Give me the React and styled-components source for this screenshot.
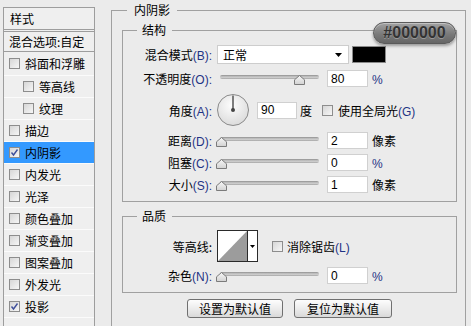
import React from 'react';
import styled, { createGlobalStyle } from 'styled-components';

const GlobalStyle = createGlobalStyle`
  html, body {
    margin: 0;
    padding: 0;
    width: 471px;
    height: 326px;
    overflow: hidden;
    background: #ebebeb;
  }
  body {
    font-family: "Noto Sans CJK SC", "Liberation Sans", sans-serif;
    font-size: 12px;
    color: #000;
  }
  #root { height: 100%; }
`;

const Page = styled.div`
  display: flex;
  align-items: flex-start;
  height: 326px;
  padding: 3px 0 0 3px;
  box-sizing: border-box;
  overflow: hidden;
`;

/* ---------- sidebar ---------- */
const Sidebar = styled.div`
  flex: none;
  width: 92px;
  height: 340px;
  margin-top: 4px;
  box-sizing: border-box;
  border: 1px solid #9d9d9d;
  background: #efefef;
  display: flex;
  flex-direction: column;
  overflow: hidden;
`;

const SideHeader = styled.div`
  height: 21px;
  line-height: 21px;
  padding-left: 6px;
  border-bottom: 1px solid #9d9d9d;
  margin-bottom: 1px;
`;

const BlendRow = styled.div`
  height: 19px;
  line-height: 19px;
  padding-left: 5px;
  border-top: 1px solid #9d9d9d;
  border-bottom: 1px solid #9d9d9d;
  white-space: nowrap;
`;

const ItemList = styled.div`
  display: flex;
  flex-direction: column;
  & > :first-child { height: 23px; }
`;

const Item = styled.div`
  height: 21px;
  display: flex;
  align-items: center;
  gap: 5px;
  padding-left: ${p => (p.$indent ? 19 : 5)}px;
  border-bottom: 1px solid #fbfbfb;
  background: ${p => (p.$selected ? '#3399ff' : 'transparent')};
  white-space: nowrap;
`;

const Box = styled.span`
  flex: none;
  display: inline-flex;
  width: 11px;
  height: 11px;
  box-sizing: border-box;
  border: 1px solid #8d8d8d;
  background: linear-gradient(135deg, #d6d6d6, #f6f6f6);
  margin-left: ${p => p.$ml || 0}px;
`;

const Check = ({ checked, ml }) => (
  <Box $ml={ml}>
    {checked && (
      <svg width="9" height="9" viewBox="0 0 9 9">
        <path d="M1.5 4.5 L3.5 7 L7.5 1.5" fill="none" stroke="#3f4f9a" strokeWidth="1.4" />
      </svg>
    )}
  </Box>
);

/* ---------- right panel ---------- */
const OuterSet = styled.fieldset`
  flex: none;
  margin: 0 0 0 16px;
  width: 355px;
  height: 360px;
  box-sizing: border-box;
  border: 1px solid #a0a0a0;
  padding: 6px 8px 0 10px;
  min-inline-size: 0;
`;

const Legend = styled.legend`
  line-height: 14px;
  font-size: 12px;
  padding: ${p => (p.$inner ? '0 6px 0 5px' : '0 7px')};
  margin-left: ${p => (p.$inner ? 14 : 5)}px;
`;

const Panel = styled.div`
  position: relative;
  display: flex;
  flex-direction: column;
`;

const Group = styled.fieldset`
  margin: ${p => p.$mt || 0}px 0 0 0;
  border: 1px solid #a0a0a0;
  padding: ${p => p.$pt}px 0 8px 0;
  min-inline-size: 0;
`;

const Rows = styled.div`
  display: flex;
  flex-direction: column;
  gap: 5px;
`;

const Row = styled.div`
  display: flex;
  align-items: center;
  height: ${p => p.$h || 17}px;
  white-space: nowrap;
`;

const Label = styled.span`
  flex: none;
  width: 89px;
  margin-right: 4px;
  text-align: right;
  white-space: nowrap;
`;

const Key = styled.span`
  font-family: "Liberation Sans", Arial, sans-serif;
  font-size: 12px;
  color: #1f3385;
`;

const Select = styled.div`
  flex: none;
  margin-left: 1px;
  width: 132px;
  height: 19px;
  box-sizing: border-box;
  border: 1px solid #cdcdcd;
  background: #fff;
  display: flex;
  align-items: center;
  justify-content: space-between;
  padding: 0 6px 0 5px;
`;

const Swatch = styled.div`
  flex: none;
  margin-left: 3px;
  width: 34px;
  height: 17px;
  box-sizing: border-box;
  border: 1px solid #8a8a8a;
  background: ${p => p.$color};
`;

const SliderBox = styled.div`
  flex: none;
  position: relative;
  width: 103px;
  height: 17px;
  box-sizing: border-box;
  padding-top: 5px;
`;

const Track = styled.div`
  margin-left: 4px;
  width: 99px;
  height: 4px;
  border-radius: 2px;
  background: linear-gradient(#8f8f8f, #d2d2d2 55%, #a5a5a5);
`;

const Thumb = styled.svg`
  position: absolute;
  top: 5px;
`;

const Slider = ({ value }) => (
  <SliderBox>
    <Track />
    <Thumb width="11" height="10" viewBox="0 0 11 10" style={{ left: Math.round(value * 0.98) }}>
      <defs>
        <linearGradient id="thg" x1="0" y1="0" x2="0" y2="1">
          <stop offset="0" stopColor="#f7f7f7" />
          <stop offset="1" stopColor="#d2d2d2" />
        </linearGradient>
      </defs>
      <path d="M5.5 0.5 L10.5 4.8 L10.5 9.5 L0.5 9.5 L0.5 4.8 Z" fill="url(#thg)" stroke="#7b7b7b" strokeLinejoin="round" />
    </Thumb>
  </SliderBox>
);

const NumInput = styled.input`
  flex: none;
  margin: 0 0 0 ${p => p.$ml || 8}px;
  width: ${p => p.$w || 41}px;
  height: 17px;
  box-sizing: border-box;
  border: 1px solid #d0d0d0;
  background: #fff;
  padding: 0 0 0 3px;
  font-family: "Liberation Sans", Arial, sans-serif;
  font-size: 12px;
  color: #000;
  outline: none;
`;

const Unit = styled.span`
  margin-left: ${p => p.$ml || 4}px;
`;

const CheckText = styled.span`
  margin-left: ${p => p.$ml || 5}px;
`;

const Dial = styled.svg`
  flex: none;
  margin-left: 1px;
`;

const ContourBox = styled.div`
  flex: none;
  margin-left: 1px;
  width: 41px;
  height: 32px;
  box-sizing: border-box;
  border: 1px solid #2a2a2a;
  display: flex;
  background: #fff;
`;

const ContourArrow = styled.div`
  flex: 1;
  border-left: 1px solid #2a2a2a;
  display: flex;
  align-items: center;
  justify-content: center;
`;

const Badge = styled.div`
  position: absolute;
  top: -1px;
  left: 251px;
  width: 83px;
  height: 22px;
  box-sizing: border-box;
  border-radius: 11px;
  border: 1px solid #5a5a5a;
  background: linear-gradient(#a3a3a3, #7a7a7a 55%, #666);
  box-shadow: 0 2px 3px rgba(0, 0, 0, 0.35), inset 0 1px 0 rgba(255, 255, 255, 0.35);
  display: flex;
  align-items: center;
  justify-content: center;
  font-family: "Liberation Sans", Arial, sans-serif;
  font-weight: bold;
  font-size: 16px;
  color: #333;
  text-shadow: 0 1px 0 rgba(255, 255, 255, 0.3);
`;

const ButtonBar = styled.div`
  margin-top: 6px;
  display: flex;
  justify-content: center;
  gap: 11px;
`;

const Button = styled.button`
  width: ${p => p.$w}px;
  height: 19px;
  padding: 0;
  box-sizing: border-box;
  border: 1px solid #707070;
  border-radius: 3px;
  background: linear-gradient(#fdfdfd, #ececec 50%, #d9d9d9);
  font-family: "Noto Sans CJK SC", sans-serif;
  font-size: 12px;
  line-height: 17px;
  color: #000;
`;

const DownArrow = () => (
  <svg width="7" height="4" viewBox="0 0 7 4">
    <path d="M0 0 H7 L3.5 4 Z" fill="#000" />
  </svg>
);

const items = [
  { label: '斜面和浮雕' },
  { label: '等高线', indent: true },
  { label: '纹理', indent: true },
  { label: '描边' },
  { label: '内阴影', checked: true, selected: true },
  { label: '内发光' },
  { label: '光泽' },
  { label: '颜色叠加' },
  { label: '渐变叠加' },
  { label: '图案叠加' },
  { label: '外发光' },
  { label: '投影', checked: true },
];

const SliderRow = ({ label, k, value, text, unit }) => (
  <Row>
    <Label>{label}<Key>({k}):</Key></Label>
    <Slider value={value} />
    <NumInput readOnly value={text} />
    <Unit>{unit}</Unit>
  </Row>
);

export default function App() {
  return (
    <>
      <GlobalStyle />
      <Page>
        <Sidebar>
          <SideHeader>样式</SideHeader>
          <BlendRow>混合选项:自定</BlendRow>
          <ItemList>
            {items.map(it => (
              <Item key={it.label} $indent={it.indent} $selected={it.selected}>
                <Check checked={it.checked} />
                <span>{it.label}</span>
              </Item>
            ))}
            <Item />
          </ItemList>
        </Sidebar>

        <OuterSet>
          <Legend>内阴影</Legend>
          <Panel>
            <Group $pt={8}>
              <Legend $inner>结构</Legend>
              <Rows>
                <Row $h={19}>
                  <Label>混合模式<Key>(B):</Key></Label>
                  <Select>
                    <span>正常</span>
                    <DownArrow />
                  </Select>
                  <Swatch $color="#000" />
                </Row>
                <Row $h={19}>
                  <Label>不透明度<Key>(O):</Key></Label>
                  <Slider value={80} />
                  <NumInput readOnly value="80" />
                  <Unit><Key>%</Key></Unit>
                </Row>
                <Row $h={34}>
                  <Label>角度<Key>(A):</Key></Label>
                  <Dial width="32" height="32" viewBox="0 0 32 32">
                    <defs>
                      <radialGradient id="dialg" cx="0.45" cy="0.35" r="0.7">
                        <stop offset="0" stopColor="#fdfdfd" />
                        <stop offset="1" stopColor="#d9d9d9" />
                      </radialGradient>
                    </defs>
                    <circle cx="16" cy="16" r="15.5" fill="url(#dialg)" stroke="#8a8a8a" />
                    <line x1="16" y1="1.5" x2="16" y2="16" stroke="#555" strokeWidth="1.5" />
                    <circle cx="16" cy="16" r="2" fill="#444" />
                  </Dial>
                  <NumInput readOnly value="90" $w={40} />
                  <Unit $ml={3}>度</Unit>
                  <Check ml={10} />
                  <CheckText>使用全局光<Key>(G)</Key></CheckText>
                </Row>
                <SliderRow label="距离" k="D" value={0} text="2" unit="像素" />
                <SliderRow label="阻塞" k="C" value={0} text="0" unit={<Key>%</Key>} />
                <SliderRow label="大小" k="S" value={0} text="1" unit="像素" />
              </Rows>
            </Group>

            <Group $pt={7} $mt={7}>
              <Legend $inner>品质</Legend>
              <Rows>
                <Row $h={32}>
                  <Label>等高线:</Label>
                  <ContourBox>
                    <svg width="29" height="30" viewBox="0 0 29 30">
                      <rect width="29" height="30" fill="#fff" />
                      <path d="M0 30 L29 0 L29 30 Z" fill="#9c9c9c" />
                    </svg>
                    <ContourArrow>
                      <svg width="5" height="3" viewBox="0 0 5 3">
                        <path d="M0 0 H5 L2.5 3 Z" fill="#000" />
                      </svg>
                    </ContourArrow>
                  </ContourBox>
                  <Check ml={14} />
                  <CheckText $ml={4}>消除锯齿<Key>(L)</Key></CheckText>
                </Row>
                <SliderRow label="杂色" k="N" value={0} text="0" unit={<Key>%</Key>} />
              </Rows>
            </Group>

            <ButtonBar>
              <Button $w={96}>设置为默认值</Button>
              <Button $w={98}>复位为默认值</Button>
            </ButtonBar>

            <Badge>#000000</Badge>
          </Panel>
        </OuterSet>
      </Page>
    </>
  );
}
